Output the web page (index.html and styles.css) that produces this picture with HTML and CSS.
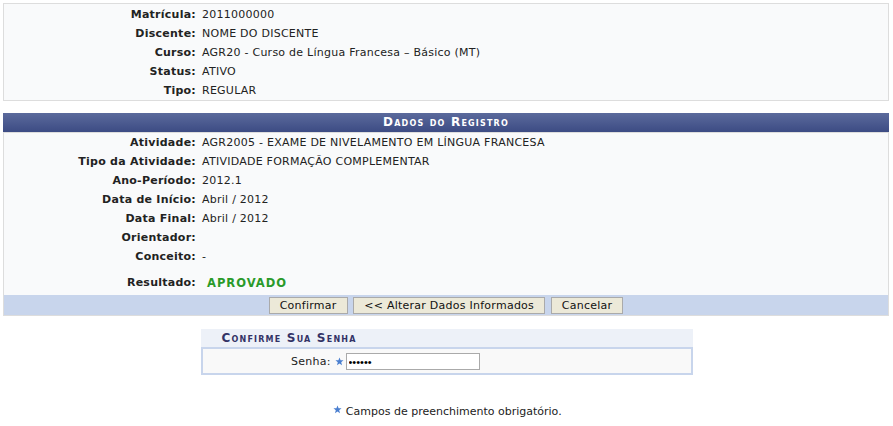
FILE: index.html
```html
<!DOCTYPE html>
<html>
<head>
    <title>Registro de Atividade</title>
    <link rel="stylesheet" href="styles.css">
</head>
<body>
    <div class="box">
        <table class="visualizacao">
            <tr><th>Matrícula:</th><td>2011000000</td></tr>
            <tr><th>Discente:</th><td>NOME DO DISCENTE</td></tr>
            <tr><th>Curso:</th><td>AGR20 - Curso de Língua Francesa – Básico (MT)</td></tr>
            <tr><th>Status:</th><td>ATIVO</td></tr>
            <tr><th>Tipo:</th><td>REGULAR</td></tr>
        </table>
    </div>

    <table class="formulario">
        <caption>Dados do Registro</caption>
        <tr><th>Atividade:</th><td>AGR2005 - EXAME DE NIVELAMENTO EM LÍNGUA FRANCESA</td></tr>
        <tr><th>Tipo da Atividade:</th><td>ATIVIDADE FORMAÇÃO COMPLEMENTAR</td></tr>
        <tr><th>Ano-Período:</th><td>2012.1</td></tr>
        <tr><th>Data de Início:</th><td>Abril / 2012</td></tr>
        <tr><th>Data Final:</th><td>Abril / 2012</td></tr>
        <tr><th>Orientador:</th><td></td></tr>
        <tr><th>Conceito:</th><td>-</td></tr>
        <tr class="resultado"><th>Resultado:</th><td><span class="aprovado">APROVADO</span></td></tr>
        <tr class="acoes">
            <td colspan="2">
                <button>Confirmar</button>
                <button>&lt;&lt; Alterar Dados Informados</button>
                <button>Cancelar</button>
            </td>
        </tr>
    </table>

    <table class="senha">
        <caption>Confirme Sua Senha</caption>
        <tr>
            <td class="senha-label">Senha: <svg class="star" viewBox="0 0 10 10"><path d="M5 0.5 L6.2 3.6 L9.5 3.7 L6.9 5.8 L7.8 9.2 L5 7.3 L2.2 9.2 L3.1 5.8 L0.5 3.7 L3.8 3.6 Z"/></svg></td>
            <td><input type="password" class="campo" value="123456"></td>
        </tr>
    </table>

    <p class="obrigatorio"><svg class="star" viewBox="0 0 10 10"><path d="M5 0.5 L6.2 3.6 L9.5 3.7 L6.9 5.8 L7.8 9.2 L5 7.3 L2.2 9.2 L3.1 5.8 L0.5 3.7 L3.8 3.6 Z"/></svg> Campos de preenchimento obrigatório.</p>
</body>
</html>
```

FILE: styles.css
```css
body { margin: 0; padding: 3px; font-family: "DejaVu Sans", Verdana, sans-serif; font-size: 11px; letter-spacing: 0.25px; color: #222; background: #fff; }
table { border-collapse: collapse; }

.box { width: 884px; border: 1px solid #ddd; background: #f9fafb; padding: 1px 0 0; }
.visualizacao { width: 100%; }
.visualizacao th, .formulario th { width: 192px; text-align: right; font-weight: bold; padding: 0 5px 0 0; height: 19px; white-space: nowrap; }
.visualizacao td, .formulario td { text-align: left; padding: 0 0 0 1px; height: 19px; }

.formulario { width: 886px; margin-top: 12px; background: #f9fafb; border: 1px solid #ddd; }
.formulario caption { background: linear-gradient(#5b6a9c, #3e4d85); color: #fff; font-weight: bold; font-variant: small-caps; letter-spacing: 1.2px; font-size: 12px; height: 18px; line-height: 18px; border-bottom: 1px solid #3e4d85; }
.formulario .resultado th, .formulario .resultado td { height: 25px; padding-top: 4px; }
.aprovado { color: #2a9a2a; font-weight: bold; letter-spacing: 1px; font-size: 11.5px; padding-left: 5px; }
.formulario .acoes td { background: #c8d5ec; text-align: center; height: 20px; padding: 0; }
.acoes button { font-family: inherit; font-size: 11px; letter-spacing: 0.25px; background: #ece9d8; border: 1px solid #aaa; color: #111; padding: 1px 10px; height: 17px; line-height: 13px; margin: 0 1px; }

.senha { width: 492px; margin: 13px auto 0; background: #f9f9f9; border: 2px solid #c8d5ec; border-top: none; }
.senha caption { background: #edf1f8; color: #333366; font-weight: bold; font-variant: small-caps; letter-spacing: 1.2px; font-size: 12px; text-align: left; padding: 0 0 0 21px; height: 18px; line-height: 18px; border-bottom: 2px solid #c8d5ec; }
.senha td { padding: 4px 0 3px; }
.senha-label { width: 141px; text-align: right; padding-right: 2px !important; }
.campo { width: 128px; height: 13px; border: 1px solid #aaa; font-size: 11px; padding: 1px 2px; letter-spacing: 0; }

.star { width: 9px; height: 9px; fill: #4a7fd0; vertical-align: top; margin-top: 2px; }
.obrigatorio { text-align: center; margin: 30px 0 0; letter-spacing: 0; padding-left: 2px; }
.obrigatorio .star { margin-top: 0; }
```
